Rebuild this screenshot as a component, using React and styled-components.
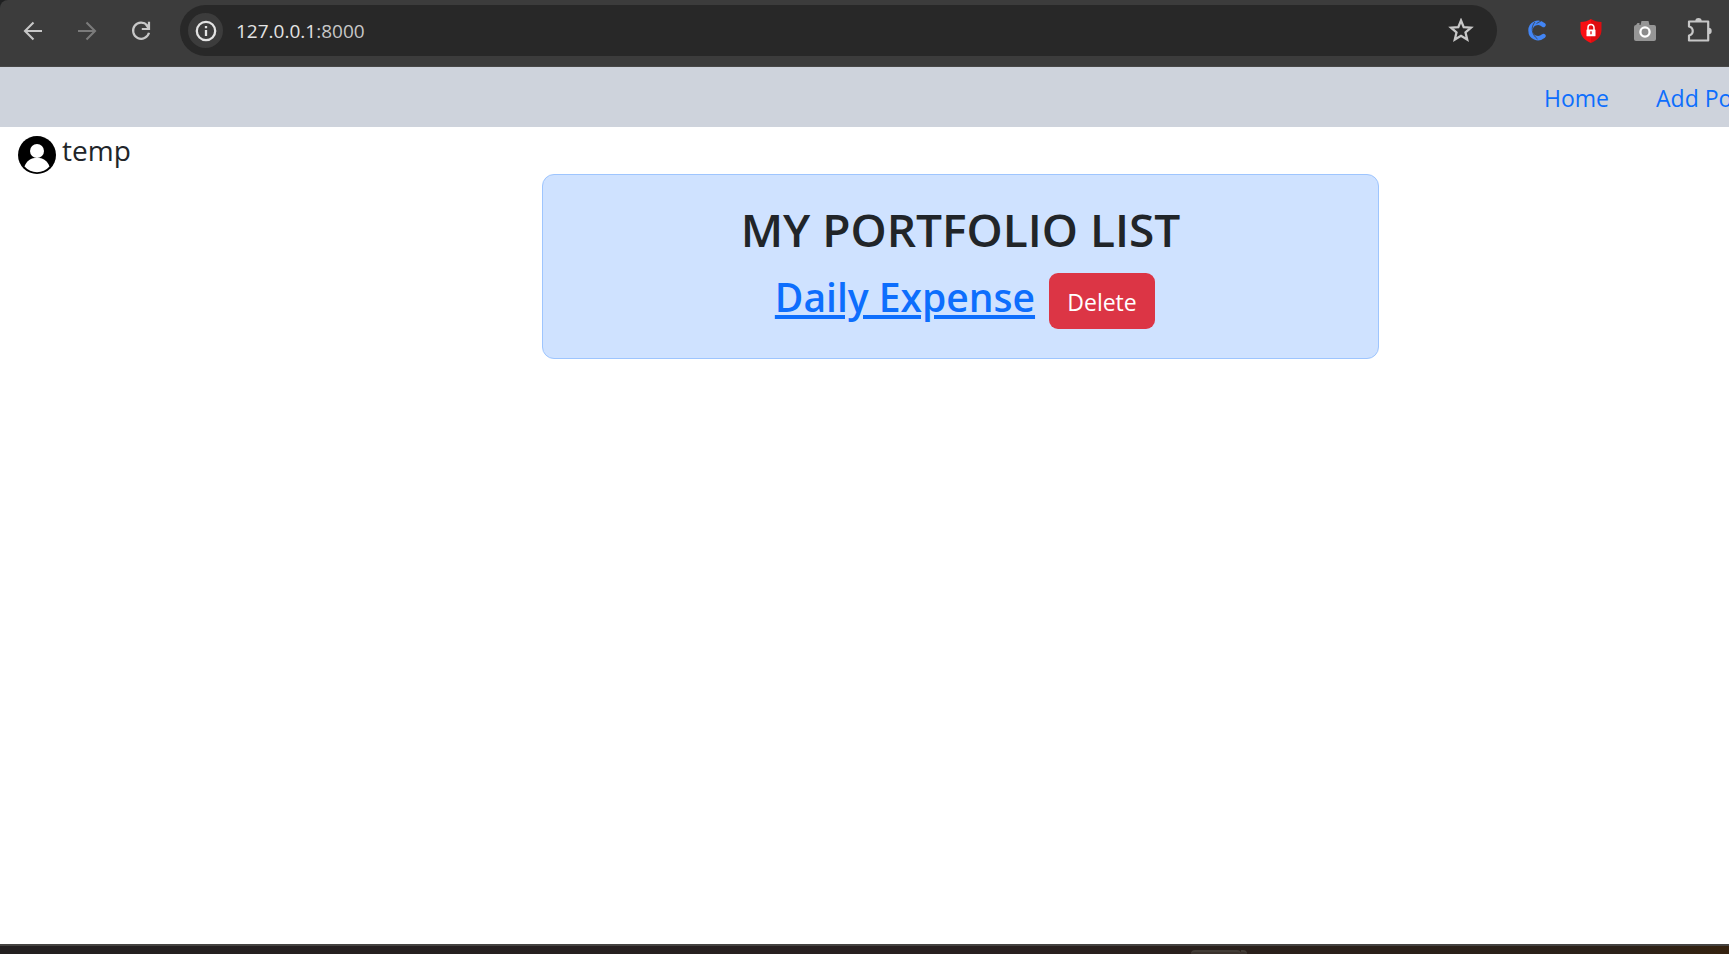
import React from "react";
import styled, { createGlobalStyle } from "styled-components";

const GlobalStyle = createGlobalStyle`
  *, *::before, *::after { box-sizing: border-box; }
  body {
    margin: 0;
    background: #fff;
    color: #212529;
    font-family: "Open Sans", "Noto Sans", sans-serif;
  }
  h1, h2, p { margin: 0; }
  svg { display: block; flex: none; }
`;

const Screen = styled.div`
  display: flex;
  flex-direction: column;
  min-height: 100vh;
  overflow: hidden;
`;

const Toolbar = styled.header`
  display: flex;
  align-items: center;
  height: 67px;
  padding: 0 9px 5px 12px;
  background: #3c3c3c;
  border-bottom: 1px solid #474747;
  border-top-left-radius: 8px;
`;

const ToolbarFrame = styled.div`
  background: #1f2021;
`;

const IconButton = styled.button`
  display: grid;
  place-items: center;
  flex: none;
  width: ${(p) => p.$size || 42}px;
  height: ${(p) => p.$size || 42}px;
  padding: 0;
  border: 0;
  border-radius: 50%;
  background: ${(p) => p.$fill || "transparent"};
  color: ${(p) => (p.disabled ? "#7b7b7b" : "#c7c7c7")};
`;

const ButtonGroup = styled.div`
  display: flex;
  gap: 12px;
`;

const AddressBar = styled.form`
  display: flex;
  flex: 1;
  align-items: center;
  height: 51px;
  margin: 0 19px 0 18px;
  padding: 0 15px 0 8px;
  border-radius: 26px;
  background: #282828;
`;

const Address = styled.label`
  position: relative;
  display: flex;
  flex: 1;
  margin-left: 13px;
  font-size: 19px;
  line-height: 28px;
`;

const AddressText = styled.span`
  color: #e3e3e3;
`;

const Port = styled.span`
  color: #c7c7c7;
`;

const AddressInput = styled.input`
  position: absolute;
  inset: 0;
  width: 100%;
  border: 0;
  outline: 0;
  padding: 0;
  background: transparent;
  font: inherit;
`;

const SiteNav = styled.nav`
  display: flex;
  justify-content: flex-end;
  height: 60px;
  background: #ced3dc;
`;

const NavLinks = styled.div`
  display: flex;
  flex: none;
  align-items: center;
  gap: 47px;
  width: 185px;
  padding-top: 2px;
  white-space: nowrap;
`;

const NavLink = styled.a`
  color: #0d6efd;
  font-size: 23px;
  line-height: 36px;
  text-decoration: none;
`;

const Page = styled.main`
  flex: 1;
  padding-top: 6px;
`;

const User = styled.div`
  display: flex;
  gap: 6px;
  height: 41px;
  padding-left: 18px;
`;

const UserName = styled.span`
  font-size: 28px;
  line-height: 34px;
`;

const Avatar = styled.div`
  padding-top: 3px;
`;

const Card = styled.section`
  display: flex;
  flex-direction: column;
  align-items: center;
  gap: 14px;
  width: 48.4%;
  height: 185px;
  margin-left: 31.35%;
  padding-top: 24px;
  border: 1px solid #9ec5fe;
  border-radius: 12px;
  background: #cfe2ff;
`;

const CardTitle = styled.h1`
  font-size: 46px;
  font-weight: 600;
  line-height: 60px;
  white-space: nowrap;
`;

const Entry = styled.div`
  display: flex;
  gap: 14px;
  padding-left: 9px;
`;

const EntryLink = styled.a`
  color: #0d6efd;
  font-size: 39px;
  font-weight: 600;
  line-height: 48px;
  text-decoration-thickness: 4px;
  text-underline-offset: 3px;
  white-space: nowrap;
`;

const DeleteButton = styled.button`
  width: 106px;
  height: 56px;
  padding: 2px 0 0;
  border: 0;
  border-radius: 9px;
  background: #dc3545;
  color: #fff;
  font-family: inherit;
  font-size: 23px;
`;

const Taskbar = styled.footer`
  display: flex;
  height: 10px;
  padding-left: 68.9%;
  border-top: 2px solid #454341;
  background: linear-gradient(90deg, #231f20 0%, #282020 55%, #2a2019 80%, #2b2119 94%, #35220f 100%);
`;

const TaskbarItem = styled.div`
  align-self: flex-end;
  width: ${(p) => p.$width}px;
  height: 4px;
  border-top: 2px solid #433d37;
  border-top-left-radius: ${(p) => (p.$left ? 4 : 0)}px;
  border-top-right-radius: 4px;
  background: #39312c;
`;

export default function App() {
  return (
    <>
      <GlobalStyle />
      <Screen>
        <ToolbarFrame>
          <Toolbar>
            <ButtonGroup>
              <IconButton type="button" aria-label="Back">
                <svg width="20" height="20" viewBox="0 0 20 20" fill="none" stroke="currentColor" strokeWidth="2.1">
                  <path d="M19 10H2.5M10.5 1.5 2 10l8.500 8.500" />
                </svg>
              </IconButton>
              <IconButton type="button" aria-label="Forward" disabled>
                <svg width="20" height="20" viewBox="0 0 20 20" fill="none" stroke="currentColor" strokeWidth="2.1">
                  <path d="M1 10h16.500M9.500 1.500 18 10l-8.500 8.500" />
                </svg>
              </IconButton>
              <IconButton type="button" aria-label="Reload">
                <svg width="20" height="20" viewBox="0 0 20 20" fill="none" stroke="currentColor" strokeWidth="2.2">
                  <path d="M16.200 4.200A8.100 8.100 0 1 0 18 11.800M18 0.800V8h-7.200M17.500 7l-2.500-3.500" />
                </svg>
              </IconButton>
            </ButtonGroup>
            <AddressBar>
              <IconButton type="button" aria-label="Site information" $size={35} $fill="#3c3c3c">
                <svg width="22" height="22" viewBox="0 0 22 22" fill="none" stroke="#e3e3e3" strokeWidth="2.300">
                  <circle cx="11" cy="11" r="9.200" />
                  <path d="M11 10v6M11 6v2.300" />
                </svg>
              </IconButton>
              <Address>
                <AddressText>127.0.0.1</AddressText>
                <Port>:8000</Port>
                <AddressInput aria-label="Address" />
              </Address>
              <IconButton type="button" aria-label="Bookmark this page">
                <svg width="26" height="26" viewBox="0 0 26 26" fill="none" stroke="currentColor" strokeWidth="2.300">
                  <path d="M13 2.500l2.700 6.600 7.300.6-5.500 4.800 1.700 7.100L13 17.800l-6.200 3.800 1.700-7.100L3 9.700l7.300-.6z" />
                </svg>
              </IconButton>
            </AddressBar>
            <ButtonGroup>
              <IconButton type="button" aria-label="C extension">
                <svg width="20" height="22" viewBox="0 0 20 22" fill="none" stroke="#4285f4">
                  <path d="M16.500 5C11 .3 3.500 4 3.500 10.500c0 6.800 7.500 10 13 5.500" strokeWidth="4.400" strokeLinecap="round" />
                  <path d="M8 2C3.500 7 4.500 14.500 10.500 19M9.500 3.500l4.500-2.500" stroke="#3c3c3c" strokeWidth=".8" />
                </svg>
              </IconButton>
              <IconButton type="button" aria-label="Secure connection extension">
                <svg width="22" height="24" viewBox="0 0 22 24">
                  <path d="M11 0C8 2 4.500 3 .5 3v8C.5 17.500 5 21.500 11 24z" fill="#f90f12" />
                  <path d="M11 0c3 2 6.500 3 10.500 3v8c0 6.500-4.500 10.500-10.500 13z" fill="#df0d10" />
                  <path d="M8 11V8.500a3 3 0 0 1 6 0V11" fill="none" stroke="#fff" strokeWidth="1.500" />
                  <rect x="6.500" y="10.500" width="9" height="6.800" rx=".6" fill="#fff" />
                  <path d="M11 12.300v3" stroke="#e20d10" strokeWidth="1.300" />
                </svg>
              </IconButton>
              <IconButton type="button" aria-label="Screenshot extension">
                <svg width="24" height="22" viewBox="0 0 24 22">
                  <path d="M3 5l1.500-2h2V5h1l1-4h7l1 4H21a2 2 0 0 1 2 2v12a2 2 0 0 1-2 2H3a2 2 0 0 1-2-2V7a2 2 0 0 1 2-2z" fill="#969696" />
                  <circle cx="12" cy="12" r="4.600" fill="#8b8b8b" stroke="#fff" strokeWidth="2.300" />
                </svg>
              </IconButton>
              <IconButton type="button" aria-label="Extensions">
                <svg width="26" height="26" viewBox="0 0 26 26">
                  <path d="M3 3.500h19.200v19H3v-5c5-1.500 5-7.500 0-9z" fill="none" stroke="#c7c7c7" strokeWidth="2.200" strokeLinejoin="round" />
                  <path d="M9.300 3.200a3.200 3.200 0 0 1 6.400 0zM22.500 9.800a3.200 3.200 0 0 1 0 6.400z" fill="#c7c7c7" />
                </svg>
              </IconButton>
            </ButtonGroup>
          </Toolbar>
        </ToolbarFrame>
        <SiteNav>
          <NavLinks>
            <NavLink href="#home">Home</NavLink>
            <NavLink href="#add">Add Portfolio</NavLink>
          </NavLinks>
        </SiteNav>
        <Page>
          <User>
            <Avatar>
              <svg width="38" height="38" viewBox="0 0 38 38">
                <circle cx="19" cy="19" r="19" fill="#000" />
                <circle cx="19" cy="15" r="7" fill="#fff" />
                <path d="M6.500 30.500C8.500 25 13 21.700 19 21.700S29.500 25 31.500 30.500C28 34.300 24 36.200 19 36.200S10 34.300 6.500 30.500z" fill="#fff" />
              </svg>
            </Avatar>
            <UserName>temp</UserName>
          </User>
          <Card>
            <CardTitle>MY PORTFOLIO LIST</CardTitle>
            <Entry>
              <EntryLink href="#daily-expense">Daily Expense</EntryLink>
              <DeleteButton type="button">Delete</DeleteButton>
            </Entry>
          </Card>
        </Page>
        <Taskbar>
          <TaskbarItem $width={50} $left />
          <TaskbarItem $width={6} />
        </Taskbar>
      </Screen>
    </>
  );
}
